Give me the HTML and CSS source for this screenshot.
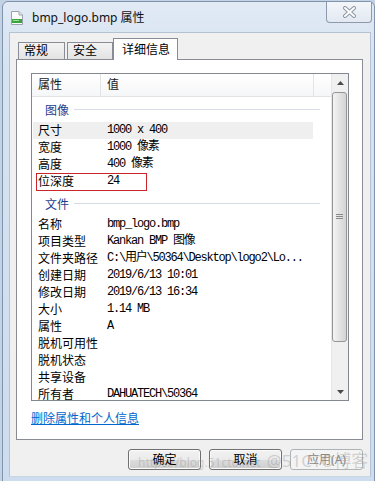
FILE: index.html
```html
<!DOCTYPE html>
<html>
<head>
    <link rel="stylesheet" href="styles.css">
</head>
<body>
    <div class="window">
        <div class="titlebar">
            <svg class="app-icon" width="12" height="14" viewBox="0 0 12 14">
                <path d="M0.5 0.5 H8 L11.5 4 V13.5 H0.5 Z" fill="#fbfbfb" stroke="#9aa3ad"/>
                <path d="M8 0.5 V4 H11.5" fill="#e4e8ec" stroke="#9aa3ad"/>
                <rect x="1" y="8" width="10" height="4" fill="#3aa53a"/>
                <rect x="2" y="9" width="6" height="1" fill="#9fe09f"/>
            </svg>
            <span class="title">bmp_logo.bmp 属性</span>
            <div class="close-btn">
                <svg width="15" height="12" viewBox="0 0 15 12">
                    <path d="M3 2 L12 10 M12 2 L3 10" stroke="#8c97a4" stroke-width="4" stroke-linecap="round"/>
                    <path d="M3 2 L12 10 M12 2 L3 10" stroke="#fdfdfd" stroke-width="2" stroke-linecap="round"/>
                </svg>
            </div>
        </div>

        <div class="client">
            <div class="tabs">
                <div class="tab tab-general">常规</div>
                <div class="tab tab-security">安全</div>
                <div class="tab tab-details active">详细信息</div>
            </div>

            <div class="panel">
                <div class="list">
                    <div class="list-main">
                        <div class="list-head">
                            <div class="head-name">属性</div>
                            <div class="head-value">值</div>
                            <div class="head-rest"></div>
                        </div>
                        <div class="list-body">
                            <div class="group"><span>图像</span><i class="group-line"></i></div>
                            <div class="row hover"><span class="label">尺寸</span><span class="value">1000 x 400</span></div>
                            <div class="row"><span class="label">宽度</span><span class="value">1000 像素</span></div>
                            <div class="row"><span class="label">高度</span><span class="value">400 像素</span></div>
                            <div class="row marked"><span class="label">位深度</span><span class="value">24</span><i class="mark"></i></div>

                            <div class="group group-second"><span>文件</span><i class="group-line"></i></div>
                            <div class="row"><span class="label">名称</span><span class="value">bmp_logo.bmp</span></div>
                            <div class="row"><span class="label">项目类型</span><span class="value">Kankan BMP 图像</span></div>
                            <div class="row"><span class="label">文件夹路径</span><span class="value">C:\用户\50364\Desktop\logo2\Lo...</span></div>
                            <div class="row"><span class="label">创建日期</span><span class="value">2019/6/13 10:01</span></div>
                            <div class="row"><span class="label">修改日期</span><span class="value">2019/6/13 16:34</span></div>
                            <div class="row"><span class="label">大小</span><span class="value">1.14 MB</span></div>
                            <div class="row"><span class="label">属性</span><span class="value">A</span></div>
                            <div class="row"><span class="label">脱机可用性</span><span class="value"></span></div>
                            <div class="row"><span class="label">脱机状态</span><span class="value"></span></div>
                            <div class="row"><span class="label">共享设备</span><span class="value"></span></div>
                            <div class="row"><span class="label">所有者</span><span class="value">DAHUATECH\50364</span></div>
                        </div>
                    </div>
                    <div class="scrollbar">
                        <div class="scroll-arrow">
                            <svg width="7" height="4" viewBox="0 0 7 4"><path d="M0 4 L3.5 0 L7 4 Z" fill="#4a4a4a"/></svg>
                        </div>
                        <div class="scroll-track">
                            <div class="scroll-thumb">
                                <svg width="7" height="6" viewBox="0 0 7 6">
                                    <path d="M0 0.5 H7 M0 2.5 H7 M0 4.5 H7" stroke="#8a8a8a" stroke-width="1"/>
                                </svg>
                            </div>
                        </div>
                        <div class="scroll-arrow">
                            <svg width="7" height="4" viewBox="0 0 7 4"><path d="M0 0 L7 0 L3.5 4 Z" fill="#4a4a4a"/></svg>
                        </div>
                    </div>
                </div>
                <a class="remove-link" href="#">删除属性和个人信息</a>
            </div>

            <div class="buttons">
                <button class="btn">确定</button>
                <button class="btn">取消</button>
                <button class="btn" disabled>应用(A)</button>
            </div>

            <div class="watermark"><span class="wm-url">https://blog.51cto.net</span><span class="wm-brand">@51CTO博客</span></div>
        </div>
    </div>
</body>
</html>
```

FILE: styles.css
```css
body {
    margin: 0;
    background: #c3d3e6;
    overflow: hidden;
    font-family: "Noto Sans", "Noto Sans CJK SC", sans-serif;
}

.window {
    margin: 1px 0 0 2px;
    width: 373px;
    box-sizing: border-box;
    border: 1px solid #8294ab;
    border-radius: 6px 6px 0 0;
    background: linear-gradient(to bottom, #e1eaf5 0px, #d6e3f2 60px, #cddcee 100%);
    padding-bottom: 4px;
}

/* Title bar */
.titlebar {
    height: 30px;
    display: flex;
    align-items: center;
}

.app-icon {
    margin-left: 8px;
    margin-top: 2px;
    flex: none;
}

.title {
    margin-left: 9px;
    font-size: 12px;
    color: #111;
}

.close-btn {
    margin-left: auto;
    margin-right: 2px;
    align-self: flex-start;
    margin-top: 0;
    width: 46px;
    height: 21px;
    box-sizing: border-box;
    border: 1px solid #8e9aab;
    border-top: none;
    border-radius: 0 0 4px 4px;
    background: linear-gradient(to bottom, #f3f6fa, #e2e9f1);
    display: flex;
    align-items: center;
    justify-content: center;
}

/* Client area */
.client {
    position: relative;
    margin: 0 3px 0 6px;
    height: 445px;
    box-sizing: border-box;
    background: #f0f0f0;
    border: 1px solid #b4c2d3;
    border-bottom-color: #c9d5e3;
    padding: 5px 7px 0 6px;
}

.tabs {
    height: 21px;
    display: flex;
    align-items: flex-end;
    padding-left: 2px;
}

.tab {
    position: relative;
    height: 17px;
    box-sizing: border-box;
    border: 1px solid #898c95;
    border-bottom: none;
    background: linear-gradient(to bottom, #f3f3f3, #e3e3e3);
    font-size: 12px;
    line-height: 15px;
    color: #000;
    padding-left: 5px;
}

.tab-general {
    width: 47px;
    margin-right: 2px;
}

.tab-security {
    width: 46px;
    margin-right: 0;
}

.tab.active {
    height: 22px;
    margin-bottom: -1px;
    width: 65px;
    background: #fff;
    z-index: 1;
    padding-left: 8px;
    line-height: 22px;
}

.panel {
    height: 381px;
    box-sizing: border-box;
    border: 1px solid #898c95;
    background: #fff;
    padding: 13px 0 0 14px;
}

/* Property list */
.list {
    width: 318px;
    height: 328px;
    box-sizing: border-box;
    border: 1px solid #828790;
    display: flex;
    background: #fff;
}

.list-main {
    flex: 1;
    min-width: 0;
}

.list-head {
    height: 22px;
    display: flex;
    border-bottom: 1px solid #e2e3e5;
    background: linear-gradient(to bottom, #ffffff, #f5f6f7);
    font-size: 12px;
    line-height: 22px;
    color: #1a1a1a;
}

.head-name {
    width: 62px;
    padding-left: 6px;
    border-right: 1px solid #e3e4e6;
}

.head-value {
    width: 206px;
    padding-left: 6px;
    border-right: 1px solid #e3e4e6;
}

.head-rest {
    flex: 1;
}

.list-body {
    height: 304px;
    overflow: hidden;
}

.group {
    height: 25px;
    display: flex;
    align-items: center;
    padding-left: 13px;
    padding-right: 11px;
    font-size: 12px;
    color: #1e3d8f;
}

.group-second {
    margin-top: 1px;
}

.group-line {
    flex: 1;
    height: 1px;
    margin-left: 5px;
    background: #d6dbe7;
}

.row {
    position: relative;
    height: 17px;
    width: 280px;
    margin-left: 1px;
    display: flex;
    align-items: center;
    font-size: 12px;
    color: #000;
}

.row.hover {
    background: #efefef;
}

.label {
    width: 69px;
    padding-left: 5px;
    flex: none;
    line-height: 17px;
    white-space: nowrap;
}

.value {
    font-family: "Liberation Mono", "Noto Sans CJK SC", monospace;
    font-size: 12px;
    letter-spacing: -1.2px;
    line-height: 17px;
    white-space: nowrap;
}

.mark {
    position: absolute;
    left: 3px;
    top: 0;
    width: 111px;
    height: 18px;
    box-sizing: border-box;
    border: 1px solid #c9252b;
}

/* Scrollbar */
.scrollbar {
    width: 17px;
    display: flex;
    flex-direction: column;
    background: #f0f0f0;
    border-left: 1px solid #e6e6e6;
    box-sizing: border-box;
}

.scroll-arrow {
    height: 17px;
    display: flex;
    align-items: center;
    justify-content: center;
}

.scroll-track {
    flex: 1;
    padding: 1px 1px 23px 0;
}

.scroll-thumb {
    height: 250px;
    box-sizing: border-box;
    border: 1px solid #959595;
    border-radius: 3px;
    background: linear-gradient(to right, #f4f4f4, #e3e3e3 50%, #d4d4d4);
    display: flex;
    align-items: center;
    justify-content: center;
}

.remove-link {
    display: inline-block;
    margin-top: 9px;
    font-size: 12px;
    line-height: 17px;
    color: #0066cc;
    text-decoration: underline;
}

/* Dialog buttons */
.buttons {
    display: flex;
    justify-content: flex-end;
    gap: 8px;
    margin-top: 9px;
    padding-right: 0;
}

.btn {
    width: 73px;
    height: 21px;
    box-sizing: border-box;
    border: 1px solid #707070;
    border-radius: 3px;
    background: linear-gradient(to bottom, #f2f2f2 0%, #ebebeb 50%, #dddddd 51%, #cfcfcf 100%);
    box-shadow: inset 0 0 0 1px #fbfbfb;
    font-family: "Noto Sans", "Noto Sans CJK SC", sans-serif;
    font-size: 12px;
    line-height: 17px;
    color: #000;
    padding: 0;
}

.btn:disabled {
    border-color: #adb2b5;
    background: #f4f4f4;
    box-shadow: none;
    color: #8a8a8a;
}

.watermark {
    position: absolute;
    left: 128px;
    bottom: 4px;
    display: flex;
    align-items: baseline;
    gap: 6px;
    color: rgba(140, 140, 140, 0.35);
    pointer-events: none;
}

.wm-url {
    font-size: 12px;
}

.wm-brand {
    font-size: 17px;
}
```
